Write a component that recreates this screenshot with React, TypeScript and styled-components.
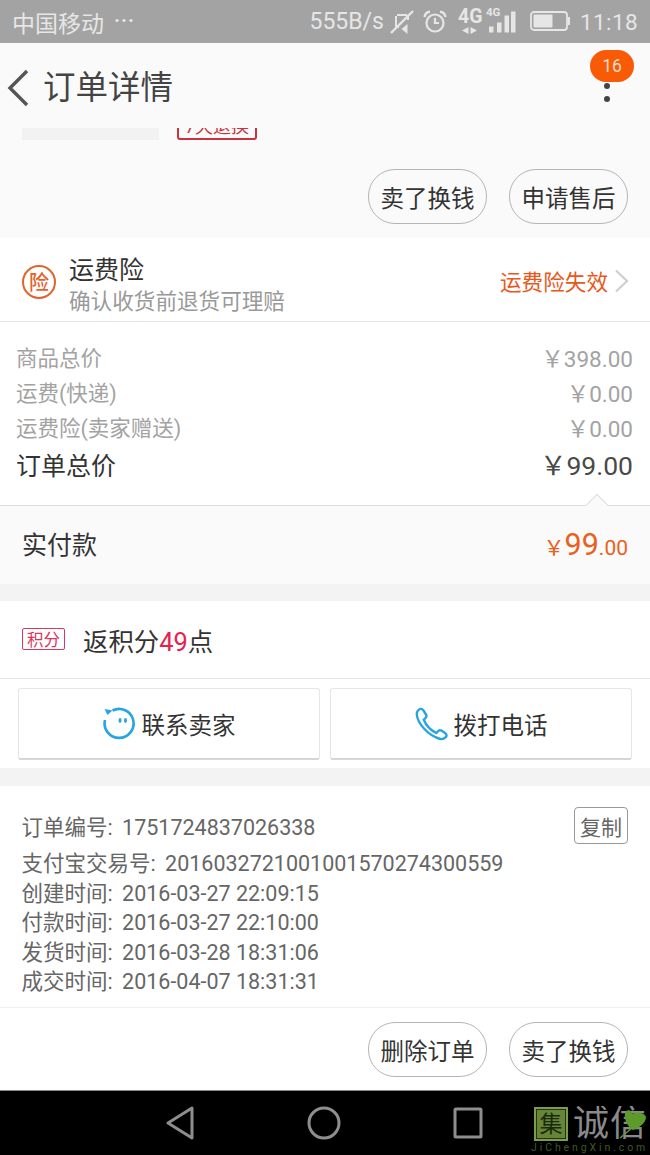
import React from "react";
import styled, { createGlobalStyle } from "styled-components";

const Global = createGlobalStyle`
  html, body { margin: 0; padding: 0; background: #fff; }
  body { font-family: Roboto, "Noto Sans CJK SC", sans-serif; color: #333; }
  * { box-sizing: border-box; }
`;
const Page = styled.div`width: 650px; height: 1155px; overflow: hidden; display: flex; flex-direction: column;`;

const StatusBar = styled.div`
  height: 43px; background: #a3a3a3; color: #e6e6e6; display: flex; align-items: center;
  padding: 0 12px; font-size: 23px; flex: none;
`;
const Dots = styled.span`margin-left: 10px; font-size: 20px; font-weight: 700; letter-spacing: 1px; position: relative; top: -2px;`;
const StatusRight = styled.div`margin-left: auto; display: flex; align-items: center;`;
const Speed = styled.span`font-size: 23px; margin-right: 6px;`;
const Clock = styled.span`font-size: 22.5px; margin-left: 9px; letter-spacing: 0.4px;`;

const Header = styled.div`
  height: 85px; background: #fafafa; display: flex; align-items: center; padding: 0 0 0 6px; flex: none; position: relative;
`;
const Title = styled.div`font-size: 32.5px; color: #444; margin: 6px 0 0 13px; line-height: 1;`;
const Badge = styled.div`
  position: absolute; left: 590px; top: 7px; width: 44px; height: 32px; border-radius: 16px;
  background: #f95a05; color: #f3ddc9; font-size: 17.5px; display: flex; align-items: center; justify-content: center;
`;
const Kebab = styled.div`
  position: absolute; left: 604px; top: 40px; display: flex; flex-direction: column; gap: 7px;
`;
const KebabDot = styled.span`width: 6px; height: 6px; border-radius: 50%; background: #444;`;

const TopCard = styled.div`height: 110px; background: #fafafa; flex: none; display: flex; flex-direction: column;`;
const Clipped = styled.div`
  height: 12px; overflow: hidden; display: flex; align-items: flex-end; padding-left: 18px; gap: 18px;
`;
const GreyBar = styled.div`width: 137px; height: 12px; background: #f2f2f2; margin-left: 4px;`;
const RedTag = styled.div`
  width: 80px; height: 26px; border: 2px solid #c8343c; border-radius: 3px; color: #c8343c; font-size: 18px;
  line-height: 22px; text-align: center; flex: none;
`;
const Actions = styled.div<{ $top: number }>`
  display: flex; justify-content: flex-end; gap: 22px; padding: ${p => p.$top}px 22px 0 0;
`;
const Pill = styled.div`
  width: 119px; height: 55px; border: 1px solid #b5b5b5; border-radius: 27px; background: transparent;
  font-size: 23.5px; color: #333; display: flex; align-items: center; justify-content: center;
`;

const Insurance = styled.div`
  height: 84px; background: #fff; border-bottom: 1px solid #e2e2e2; display: flex; align-items: center; flex: none;
  padding: 0 21px 0 22px;
`;
const Round = styled.div`
  width: 34px; height: 34px; border: 2px solid #e0642c; border-radius: 50%; color: #e0642c; font-size: 20px; font-weight: 500;
  display: flex; align-items: center; justify-content: center; flex: none; margin-top: 4px;
`;
const InsText = styled.div`margin: 10px 0 0 13px; display: flex; flex-direction: column;`;
const InsTitle = styled.div`font-size: 25px; line-height: 33px; color: #333;`;
const InsSub = styled.div`font-size: 21.6px; line-height: 29px; color: #999;`;
const InsState = styled.div`margin: 2px 0 0 auto; font-size: 21.6px; color: #e8581c; display: flex; align-items: center; gap: 6px;`;

const Prices = styled.div`
  height: 184px; background: #fff; padding: 17px 17px 0 16px; flex: none; border-bottom: 1px solid #dedede; position: relative;
`;
const PriceRow = styled.div<{ $strong?: boolean }>`
  display: flex; justify-content: space-between; align-items: center;
  height: 35px; font-size: ${p => p.$strong ? 25 : 21.5}px; color: ${p => p.$strong ? "#333" : "#a3a3a3"};
  margin-top: ${p => p.$strong ? 2 : 0}px;
`;
const Money = styled.span<{ $strong?: boolean }>`
  font-size: ${p => p.$strong ? 26.5 : 22.5}px; color: ${p => p.$strong ? "#4a4a4a" : "#a3a3a3"};
`;
const Notch = styled.div`
  position: absolute; left: 589px; bottom: -8px; width: 16px; height: 16px; background: #fafafa;
  border-left: 1px solid #dedede; border-top: 1px solid #dedede; transform: rotate(45deg);
`;
const Paid = styled.div`
  height: 78px; background: #fafafa; display: flex; align-items: center; justify-content: space-between; padding: 0 22px; flex: none;
`;
const PaidLabel = styled.div`font-size: 25px; color: #333; margin-bottom: 4px;`;
const PaidAmount = styled.div`color: #ea601c; font-size: 21px; display: flex; align-items: baseline; margin-bottom: 2px;`;
const PaidBig = styled.span`font-size: 30.5px;`;
const Gap = styled.div<{ $h: number }>`height: ${p => p.$h}px; background: #f3f3f3; flex: none;`;

const Points = styled.div`
  height: 78px; background: #fff; border-bottom: 1px solid #e2e2e2; display: flex; align-items: center; padding: 0 0 0 22px; flex: none;
`;
const PointTag = styled.div`
  width: 43px; height: 22px; border: 1px solid #d7385e; border-radius: 2px; color: #d7385e; font-size: 16.5px;
  display: flex; align-items: center; justify-content: center; margin-top: -2px;
`;
const PointText = styled.div`margin-left: 18px; font-size: 25.4px; color: #333;`;
const PointNum = styled.span`color: #e8214f;`;

const Contact = styled.div`
  height: 89px; background: #fff; display: grid; grid-template-columns: 302px 302px; column-gap: 10px; padding: 9px 0 0 18px; flex: none;
`;
const ContactBtn = styled.div`
  height: 72px; border: 1px solid #e6e6e6; border-bottom: 2px solid #d6d6d6; border-radius: 3px; background: #fff;
  display: flex; align-items: center; justify-content: center; gap: 5px; font-size: 23.5px; color: #333;
`;

const OrderInfo = styled.div`
  height: 222px; background: #fff; border-bottom: 1px solid #f0f0f0; padding: 23px 22px 0 21.5px; flex: none; color: #666; font-size: 21.5px;
`;
const InfoFirst = styled.div`display: flex; justify-content: space-between; align-items: flex-start; height: 40px;`;
const InfoLine = styled.div`line-height: 30px; height: 29.6px; white-space: nowrap;`;
const InfoValue = styled.span`margin-left: 4px;`;
const FirstText = styled.span`line-height: 38px;`;
const Copy = styled.div`
  width: 54px; height: 37px; border: 1.5px solid #999; border-radius: 4px; font-size: 21px; color: #666;
  display: flex; align-items: center; justify-content: center; margin-top: -2px;
`;
const BottomActions = styled.div`height: 82px; background: #fff; flex: none;`;

const NavBar = styled.div`
  height: 65px; background: #000; border-top: 1px solid #8a8a8a; flex: none; display: flex; align-items: center; position: relative;
  padding-left: 165px; gap: 112px;
`;
const Watermark = styled.div`position: absolute; left: 531px; top: 15px; width: 119px; height: 49px; overflow: hidden;`;
const MarkBox = styled.div`
  position: absolute; left: 3px; top: 1px; width: 34px; height: 34px; background: #668539; border: 2px solid #7c9a50;
  box-shadow: inset 0 0 0 1px #26350f; color: #1a2a0c; font-size: 23px; display: flex; align-items: center; justify-content: center; line-height: 1;
`;
const MarkText = styled.div`
  position: absolute; left: 42px; top: 1px; font-size: 36px; line-height: 34px; color: #8a8a8a; white-space: nowrap; letter-spacing: 1px;
`;
const MarkSub = styled.div`
  position: absolute; left: 0; top: 36px; font-size: 10.5px; color: #3e5a20; letter-spacing: 2.9px; white-space: nowrap; line-height: 12px;
`;
const Leaf = styled.svg`position: absolute; left: 87px; top: 2px;`;

const Icon = styled.svg`display: block; flex: none;`;

const MuteIcon = () => (
  <Icon width="24" height="26" viewBox="0 0 24 26" fill="none" stroke="#e6e6e6" strokeWidth="2" style={{ marginRight: -2 }}>
    <path d="M7 6h10M6 7v11h3" />
    <path d="M18 6v5" />
    <path d="M17.5 15v10l-6-5z" fill="#e6e6e6" stroke="none" />
    <path d="M1 24 23 2" strokeWidth="2.4" />
  </Icon>
);
const AlarmIcon = () => (
  <Icon width="26" height="26" viewBox="0 0 26 26" fill="none" stroke="#e6e6e6" strokeWidth="2.2" style={{ marginLeft: 10 }}>
    <circle cx="13" cy="14" r="8.5" />
    <path d="M13 9v5h4" />
    <path d="M2.5 8C3 5 5 3 8 2.8M23.5 8C23 5 21 3 18 2.8" strokeWidth="2.4" />
  </Icon>
);
const SignalIcon = () => (
  <Icon width="58" height="34" viewBox="0 0 58 34" style={{ marginLeft: 10 }}>
    <text x="0" y="17.5" fontFamily="Roboto" fontWeight="700" fontSize="19.5" fill="#e6e6e6">4G</text>
    <path d="M10.5 22l-6.5 3.5 6.500 3.500zM12.500 22l6.500 3.500-6.500 3.500z" fill="#e6e6e6" />
    <text x="28" y="10.5" fontFamily="Roboto" fontWeight="700" fontSize="11.5" fill="#e6e6e6">4G</text>
    <rect x="31" y="21.5" width="4.5" height="6" fill="#e6e6e6" />
    <rect x="39" y="17.5" width="4.5" height="10" fill="#e6e6e6" />
    <rect x="46.5" y="10.5" width="4.5" height="17" fill="#e6e6e6" />
    <rect x="53" y="6.5" width="4.5" height="21" fill="#e6e6e6" />
  </Icon>
);
const BatteryIcon = () => (
  <Icon width="41" height="21" viewBox="0 0 41 21" style={{ marginLeft: 14 }}>
    <rect x="1" y="1" width="36" height="18" rx="3" fill="none" stroke="#e6e6e6" strokeWidth="1.8" />
    <rect x="3.5" y="3.5" width="19" height="13" rx="1" fill="#e6e6e6" />
    <rect x="38" y="6" width="2" height="8" fill="#e6e6e6" />
  </Icon>
);
const BackIcon = () => (
  <Icon width="24" height="38" viewBox="0 0 24 38" fill="none" stroke="#555" strokeWidth="3.4" style={{ marginTop: 4 }}>
    <path d="M21 2 4 19l17 17" />
  </Icon>
);
const ChevronIcon = () => (
  <Icon width="15" height="24" viewBox="0 0 15 24" fill="none" stroke="#cfcfcf" strokeWidth="2.2">
    <path d="M2 1.5 13 12 2 22.5" />
  </Icon>
);
const FaceIcon = () => (
  <Icon width="34" height="34" viewBox="0 0 34 34" fill="none" stroke="#27a5e0" strokeWidth="2.6">
    <path d="M9.5 3.5A14.5 14.5 0 1 1 2 13" />
    <path d="M1.5 2 9.5 3.500 4.500 8z" fill="#27a5e0" stroke="none" />
    <ellipse cx="17" cy="13.5" rx="1.5" ry="2.4" fill="#27a5e0" stroke="none" />
    <ellipse cx="22.5" cy="13.5" rx="1.5" ry="2.4" fill="#27a5e0" stroke="none" />
  </Icon>
);
const PhoneIcon = () => (
  <Icon width="34" height="34" viewBox="0 0 34 34" fill="none" stroke="#27a5e0" strokeWidth="2.4">
    <path d="M3 3.5C5 1.3 7 1.5 8.5 3.5l2.5 4c.8 1.3.5 2.500-.5 3.500L8.800 12.700c2 5 6 10 12.500 13.300l2-2c1-1 2.300-1 3.500-.2l3.500 2.400c1.500 1.100 1.600 2.800.4 4-1.500 1.500-3.200 2.300-5.200 1.800C13 29 2.500 16 1.800 7.500 1.700 6 2.200 4.500 3 3.500Z" />
  </Icon>
);
const NavBack = () => (
  <Icon width="30" height="34" viewBox="0 0 30 34" fill="none" stroke="#8e8e8e" strokeWidth="3" strokeLinejoin="round">
    <path d="M27 2 3 17l24 15z" />
  </Icon>
);
const NavHome = () => (
  <Icon width="34" height="34" viewBox="0 0 34 34" fill="none" stroke="#8e8e8e" strokeWidth="3">
    <circle cx="17" cy="17" r="15" />
  </Icon>
);
const NavRecent = () => (
  <Icon width="30" height="32" viewBox="0 0 30 32" fill="none" stroke="#8e8e8e" strokeWidth="3" strokeLinejoin="round">
    <rect x="2" y="2" width="26" height="28" rx="1" />
  </Icon>
);

const orderLines = [
  ["支付宝交易号:", "2016032721001001570274300559"],
  ["创建时间:", "2016-03-27 22:09:15"],
  ["付款时间:", "2016-03-27 22:10:00"],
  ["发货时间:", "2016-03-28 18:31:06"],
  ["成交时间:", "2016-04-07 18:31:31"],
];

export default function App() {
  return (
    <Page>
      <Global />
      <StatusBar>
        <span>中国移动</span>
        <Dots>···</Dots>
        <StatusRight>
          <Speed>555B/s</Speed>
          <MuteIcon />
          <AlarmIcon />
          <SignalIcon />
          <BatteryIcon />
          <Clock>11:18</Clock>
        </StatusRight>
      </StatusBar>
      <Header>
        <BackIcon />
        <Title>订单详情</Title>
        <Badge>16</Badge>
        <Kebab><KebabDot /><KebabDot /></Kebab>
      </Header>
      <TopCard>
        <Clipped>
          <GreyBar />
          <RedTag>7天退换</RedTag>
        </Clipped>
        <Actions $top={29}>
          <Pill>卖了换钱</Pill>
          <Pill>申请售后</Pill>
        </Actions>
      </TopCard>
      <Insurance>
        <Round>险</Round>
        <InsText>
          <InsTitle>运费险</InsTitle>
          <InsSub>确认收货前退货可理赔</InsSub>
        </InsText>
        <InsState>运费险失效<ChevronIcon /></InsState>
      </Insurance>
      <Prices>
        <PriceRow><span>商品总价</span><Money>￥398.00</Money></PriceRow>
        <PriceRow><span>运费(快递)</span><Money>￥0.00</Money></PriceRow>
        <PriceRow><span>运费险(卖家赠送)</span><Money>￥0.00</Money></PriceRow>
        <PriceRow $strong><span>订单总价</span><Money $strong>￥99.00</Money></PriceRow>
        <Notch />
      </Prices>
      <Paid>
        <PaidLabel>实付款</PaidLabel>
        <PaidAmount>￥<PaidBig>99</PaidBig>.00</PaidAmount>
      </Paid>
      <Gap $h={17} />
      <Points>
        <PointTag>积分</PointTag>
        <PointText>返积分<PointNum>49</PointNum>点</PointText>
      </Points>
      <Contact>
        <ContactBtn><FaceIcon />联系卖家</ContactBtn>
        <ContactBtn><PhoneIcon />拨打电话</ContactBtn>
      </Contact>
      <Gap $h={18} />
      <OrderInfo>
        <InfoFirst>
          <FirstText>订单编号:<InfoValue> 1751724837026338</InfoValue></FirstText>
          <Copy>复制</Copy>
        </InfoFirst>
        {orderLines.map(([label, value]) => (
          <InfoLine key={label}>{label}<InfoValue> {value}</InfoValue></InfoLine>
        ))}
      </OrderInfo>
      <BottomActions>
        <Actions $top={14}>
          <Pill>删除订单</Pill>
          <Pill>卖了换钱</Pill>
        </Actions>
      </BottomActions>
      <NavBar>
        <NavBack />
        <NavHome />
        <NavRecent />
        <Watermark>
          <MarkBox>集</MarkBox>
          <MarkText>诚信</MarkText>
          <Leaf width="30" height="32" viewBox="0 0 30 32">
            <path d="M8 3C12 1 14 4 15 6 18 3 27 5 28 9 28 15 21 20 15 22 8 18 5 8 8 3Z" fill="#5d9a2c" />
            <path d="M2 30 14 20" stroke="#5d9a2c" strokeWidth="1.5" fill="none" />
          </Leaf>
          <MarkSub>JiChengXin.com</MarkSub>
        </Watermark>
      </NavBar>
    </Page>
  );
}
